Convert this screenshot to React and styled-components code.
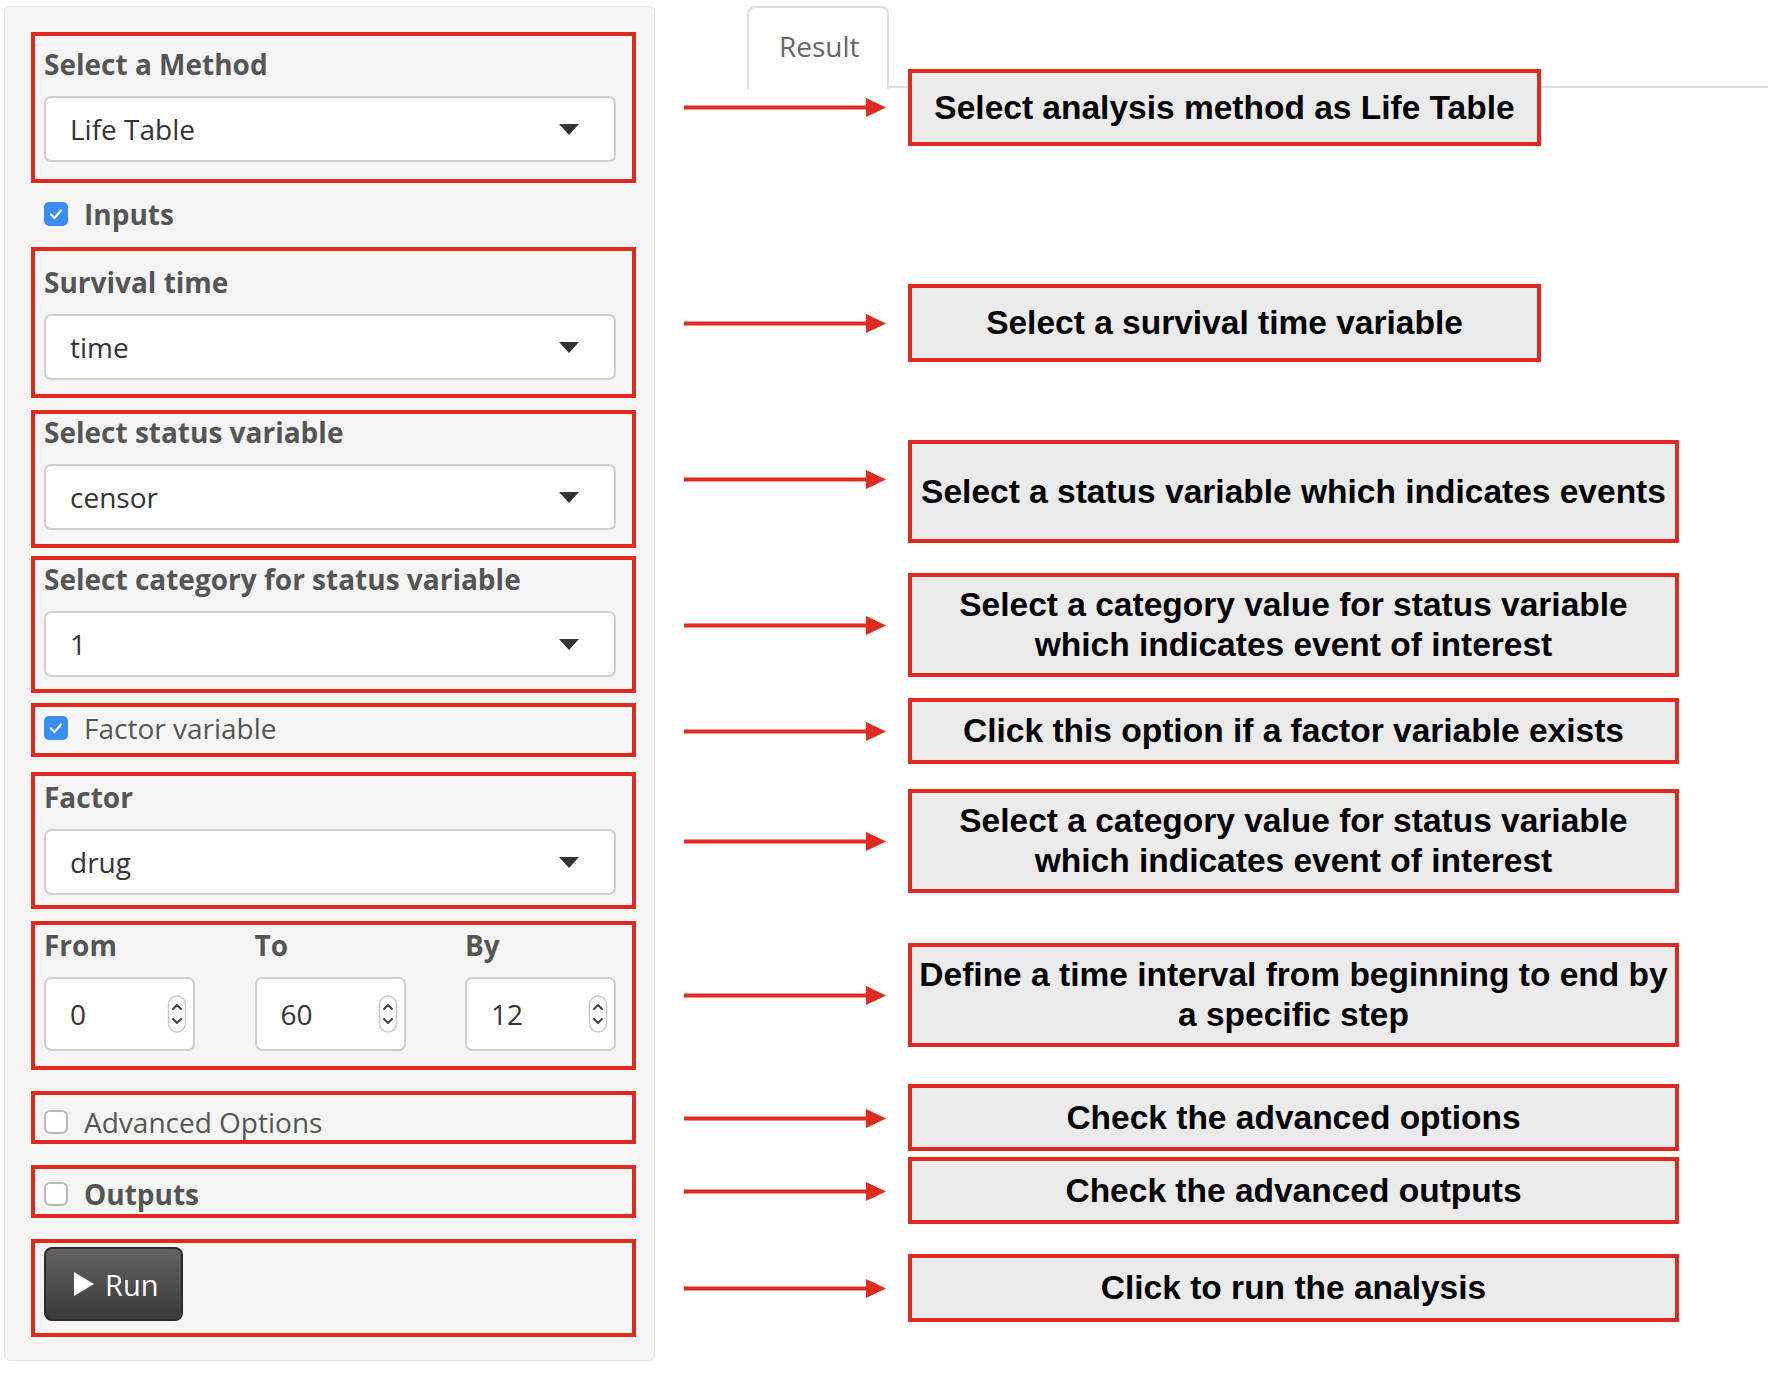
import React from "react";
import styled, { createGlobalStyle } from "styled-components";

const GlobalStyle = createGlobalStyle`
  * { box-sizing: border-box; }
  html, body { margin: 0; padding: 0; background: #ffffff; }
  body { font-family: "Open Sans", "Noto Sans", sans-serif; color: #333; }
`;

const RED = "#de2a1f";

const Page = styled.div`
  display: flex;
  align-items: flex-start;
  width: 1768px;
  min-height: 1380px;
`;

const Sidebar = styled.aside`
  margin: 6px 0 0 4px;
  width: 651px;
  flex: none;
  background: #f5f5f5;
  border: 1px solid #e3e3e3;
  border-radius: 6px;
  padding: 0 18px 23px 26px;
  display: flex;
  flex-direction: column;
`;

const AnnotBox = styled.div`
  margin-top: ${(p) => p.$mt}px;
  border: 4px solid ${RED};
  padding: ${(p) => p.$pt}px 17px ${(p) => p.$pb}px 9px;
  display: flex;
  flex-direction: column;
`;

const Label = styled.div`
  font-weight: 700;
  font-size: 28px;
  line-height: 32px;
  height: 32px;
  color: #555;
  white-space: nowrap;
`;

const SelectBox = styled.div`
  margin-top: 16px;
  height: 66px;
  width: 572px;
  background: #fff;
  border: 2px solid #cfcfcf;
  border-radius: 7px;
  display: flex;
  align-items: center;
  justify-content: space-between;
  padding: 0 35px 0 24px;
  font-size: 28px;
  color: #333;
`;

const Caret = styled.span`
  width: 0;
  height: 0;
  margin-top: 0;
  border-left: 10px solid transparent;
  border-right: 10px solid transparent;
  border-top: 11px solid #333;
`;

const CheckRow = styled.label`
  display: flex;
  align-items: center;
  gap: 16px;
  height: 32px;
  margin-top: ${(p) => p.$mt || 0}px;
  padding-left: ${(p) => p.$pl || 0}px;
  font-size: 28px;
  line-height: 32px;
  font-weight: ${(p) => (p.$bold ? 700 : 400)};
  color: #555;
  white-space: nowrap;
`;

const Box = styled.span`
  width: 24px;
  height: 24px;
  flex: none;
  display: inline-flex;
  align-items: center;
  justify-content: center;
  background: ${(p) => (p.$checked ? "#3b8df2" : "#fff")};
  border: ${(p) => (p.$checked ? "none" : "2px solid #b9b9b9")};
  border-radius: ${(p) => (p.$checked ? "5px" : "6px")};
`;

const NumberRow = styled.div`
  display: flex;
  justify-content: space-between;
  width: 572px;
`;

const NumberCol = styled.div`
  width: 151px;
  display: flex;
  flex-direction: column;
`;

const NumberInput = styled.div`
  margin-top: 16px;
  height: 74px;
  background: #fff;
  border: 2px solid #cfcfcf;
  border-radius: 7px;
  display: flex;
  align-items: center;
  justify-content: space-between;
  padding: 0 6px 0 24px;
  font-size: 28px;
  color: #333;
`;

const RunButton = styled.button`
  width: 139px;
  height: 74px;
  border: 2px solid #2b2b2b;
  border-radius: 8px;
  background: linear-gradient(#626262, #3b3b3b);
  color: #fff;
  display: flex;
  align-items: center;
  gap: 11px;
  padding: 0 0 0 28px;
  font-family: "Open Sans", sans-serif;
  font-size: 29px;
  line-height: 1;
`;

const Main = styled.main`
  flex: 1;
  display: grid;
`;

const Layer = styled.div`
  grid-area: 1 / 1;
  display: flex;
  flex-direction: ${(p) => p.$dir || "row"};
  align-self: start;
`;

const TabBar = styled(Layer)`
  align-items: flex-end;
  padding: 6px 0 0 92px;
`;

const Tab = styled.div`
  width: 142px;
  height: 83px;
  background: #fff;
  border: 2px solid #dedede;
  border-bottom: none;
  border-radius: 8px 8px 0 0;
  padding: 22px 0 0 30px;
  font-size: 28px;
  line-height: 32px;
  color: #666;
`;

const TabLine = styled.div`
  flex: 1;
  height: 2px;
  margin-bottom: 1px;
  background: #dedede;
`;

const Notes = styled(Layer)`
  padding-left: 29px;
`;

const NoteRow = styled.div`
  display: flex;
  align-items: flex-start;
  margin-top: ${(p) => p.$mt}px;
`;

const Arrow = styled.svg`
  flex: none;
  margin-top: ${(p) => p.$top}px;
  margin-right: 22px;
`;

const Callout = styled.div`
  width: ${(p) => p.$w}px;
  height: ${(p) => p.$h}px;
  border: 4px solid ${RED};
  background: #ebebeb;
  display: flex;
  align-items: center;
  justify-content: center;
  text-align: center;
  font-family: "Liberation Sans", Arial, sans-serif;
  font-weight: 700;
  font-size: 33.5px;
  line-height: 40px;
  color: #000;
  white-space: nowrap;
`;

function Check({ checked }) {
  return (
    <Box $checked={checked}>
      {checked && (
        <svg width="16" height="16" viewBox="0 0 16 16">
          <polyline points="3,8.5 6.5,12 13,4.5" fill="none" stroke="#fff" strokeWidth="2.2" strokeLinecap="round" strokeLinejoin="round" />
        </svg>
      )}
    </Box>
  );
}

function Spinner() {
  return (
    <svg width="20" height="38" viewBox="0 0 20 38">
      <rect x="1.5" y="1" width="17" height="36" rx="8.5" fill="#fff" stroke="#c9c9c9" strokeWidth="1.5" />
      <path d="M6 14 L10 10 L14 14" fill="none" stroke="#444" strokeWidth="2" strokeLinecap="round" strokeLinejoin="round" />
      <path d="M6 24 L10 28 L14 24" fill="none" stroke="#444" strokeWidth="2" strokeLinecap="round" strokeLinejoin="round" />
    </svg>
  );
}

function Select({ value }) {
  return (
    <SelectBox>
      <span>{value}</span>
      <Caret />
    </SelectBox>
  );
}

const notes = [
  { mt: 69, h: 77, w: 633, a: 28.5, text: ["Select analysis method as Life Table"] },
  { mt: 138, h: 78, w: 633, a: 29.5, text: ["Select a survival time variable"] },
  { mt: 78, h: 103, w: 771, a: 29.5, text: ["Select a status variable which indicates events"] },
  { mt: 30, h: 104, w: 771, a: 42.5, text: ["Select a category value for status variable", "which indicates event of interest"] },
  { mt: 21, h: 66, w: 771, a: 23.5, text: ["Click this option if a factor variable exists"] },
  { mt: 25, h: 104, w: 771, a: 42.5, text: ["Select a category value for status variable", "which indicates event of interest"] },
  { mt: 50, h: 104, w: 771, a: 42.5, text: ["Define a time interval from beginning to end by", "a specific step"] },
  { mt: 37, h: 67, w: 771, a: 24.5, text: ["Check the advanced options"] },
  { mt: 6, h: 67, w: 771, a: 24.5, text: ["Check the advanced outputs"] },
  { mt: 30, h: 68, w: 771, a: 24.5, text: ["Click to run the analysis"] },
];

function ArrowIcon({ top }) {
  return (
    <Arrow $top={top} width="202" height="19" viewBox="0 0 202 19">
      <rect x="0" y="7.5" width="184" height="4" fill={RED} />
      <polygon points="182,0 202,9.5 182,19" fill={RED} />
    </Arrow>
  );
}

export default function App() {
  return (
    <>
      <GlobalStyle />
      <Page>
        <Sidebar>
          <AnnotBox $mt={25} $pt={12} $pb={17}>
            <Label>Select a Method</Label>
            <Select value="Life Table" />
          </AnnotBox>

          <CheckRow $mt={15} $pl={13} $bold>
            <Check checked />
            Inputs
          </CheckRow>

          <AnnotBox $mt={17} $pt={15} $pb={14}>
            <Label>Survival time</Label>
            <Select value="time" />
          </AnnotBox>

          <AnnotBox $mt={12} $pt={2} $pb={14}>
            <Label>Select status variable</Label>
            <Select value="censor" />
          </AnnotBox>

          <AnnotBox $mt={8} $pt={3} $pb={12}>
            <Label>Select category for status variable</Label>
            <Select value="1" />
          </AnnotBox>

          <AnnotBox $mt={10} $pt={5} $pb={9}>
            <CheckRow>
              <Check checked />
              Factor variable
            </CheckRow>
          </AnnotBox>

          <AnnotBox $mt={15} $pt={5} $pb={10}>
            <Label>Factor</Label>
            <Select value="drug" />
          </AnnotBox>

          <AnnotBox $mt={12} $pt={4} $pb={15}>
            <NumberRow>
              {[
                ["From", "0"],
                ["To", "60"],
                ["By", "12"],
              ].map(([l, v]) => (
                <NumberCol key={l}>
                  <Label>{l}</Label>
                  <NumberInput>
                    <span>{v}</span>
                    <Spinner />
                  </NumberInput>
                </NumberCol>
              ))}
            </NumberRow>
          </AnnotBox>

          <AnnotBox $mt={21} $pt={11} $pb={2}>
            <CheckRow>
              <Check />
              Advanced Options
            </CheckRow>
          </AnnotBox>

          <AnnotBox $mt={21} $pt={9} $pb={4}>
            <CheckRow $bold>
              <Check />
              Outputs
            </CheckRow>
          </AnnotBox>

          <AnnotBox $mt={21} $pt={4} $pb={12}>
            <RunButton type="button">
              <svg width="20" height="24" viewBox="0 0 20 24">
                <polygon points="0,0 20,12 0,24" fill="#fff" />
              </svg>
              Run
            </RunButton>
          </AnnotBox>
        </Sidebar>

        <Main>
          <TabBar>
            <Tab>Result</Tab>
            <TabLine />
          </TabBar>
          <Notes $dir="column">
            {notes.map((n, i) => (
              <NoteRow key={i} $mt={n.mt}>
                <ArrowIcon top={n.a} />
                <Callout $w={n.w} $h={n.h}>
                  <div>
                    {n.text.map((t, j) => (
                      <div key={j}>{t}</div>
                    ))}
                  </div>
                </Callout>
              </NoteRow>
            ))}
          </Notes>
        </Main>
      </Page>
    </>
  );
}
